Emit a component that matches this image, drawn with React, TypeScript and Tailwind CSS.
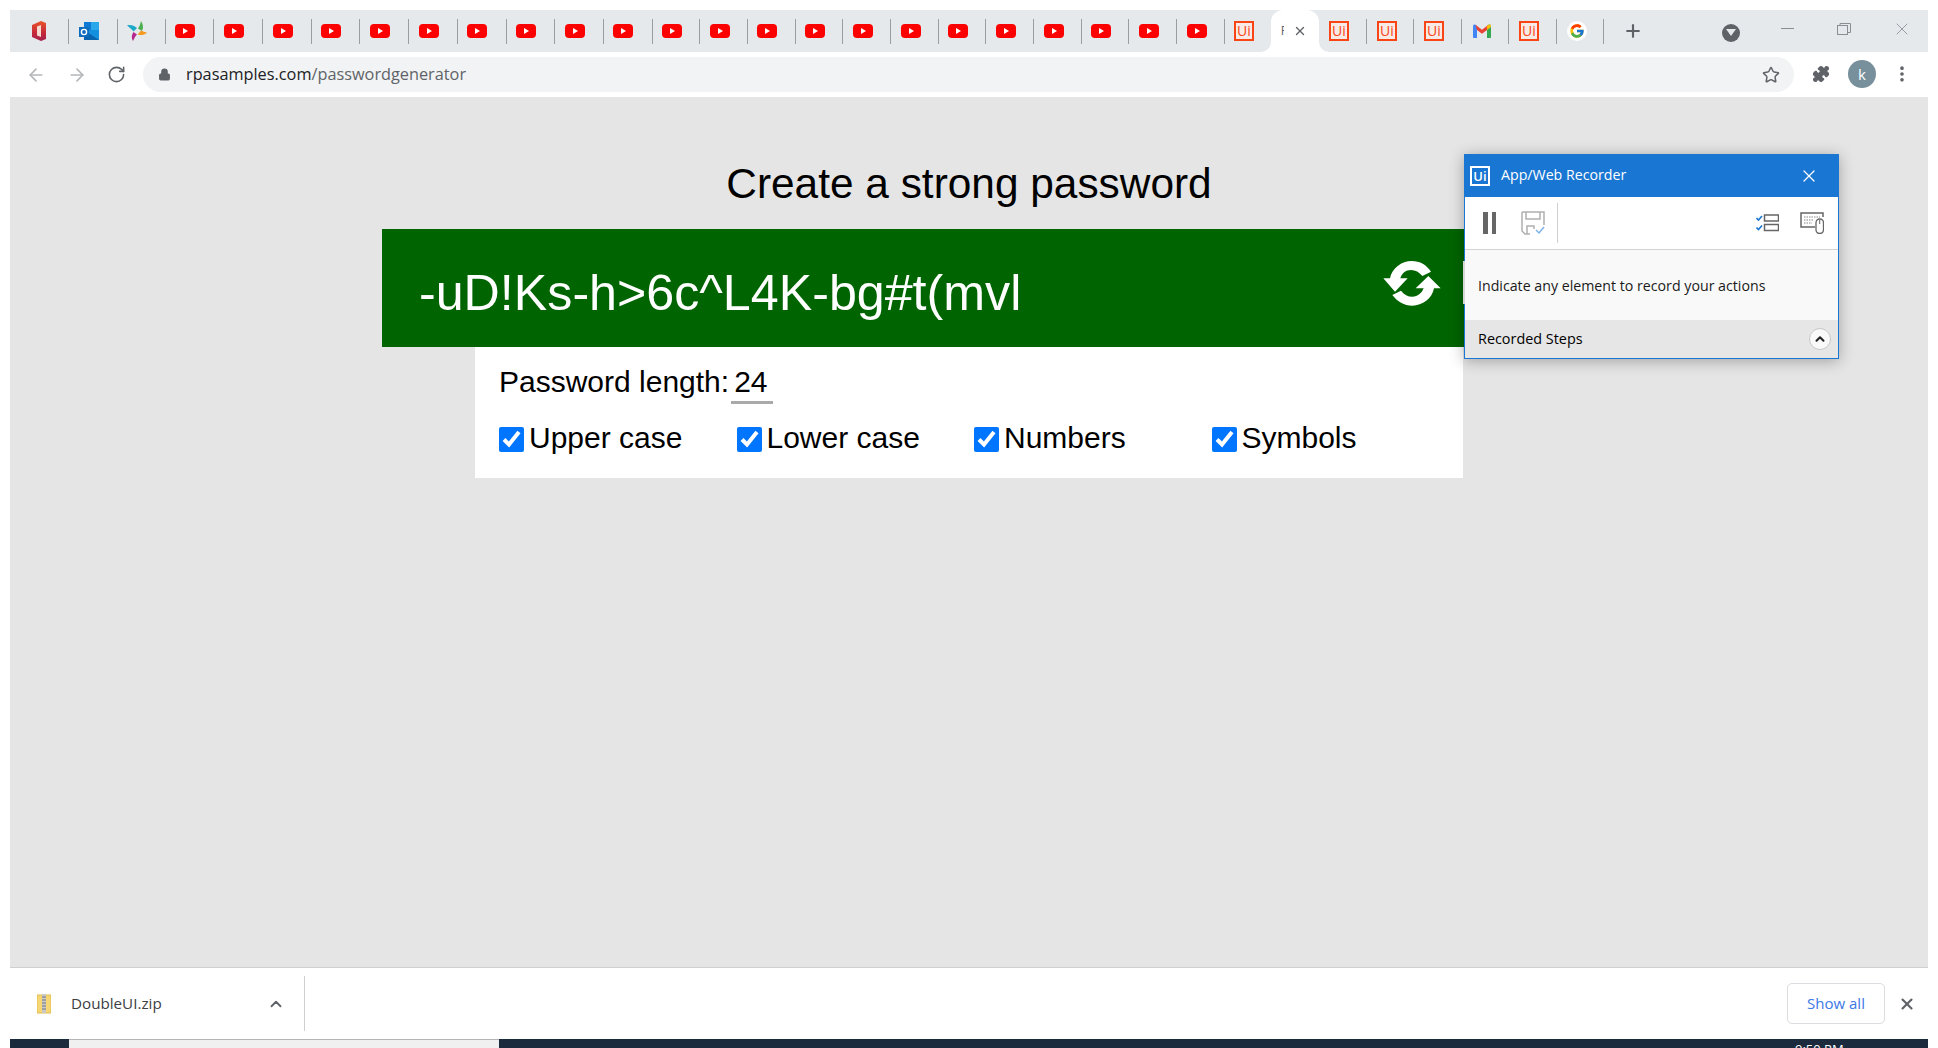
import { ArrowLeft, ArrowRight, ChevronUp, Lock, MoreVertical, Plus, Puzzle, RotateCw, Star, X } from "lucide-react";
import { FcGoogle } from "react-icons/fc";

const ui = "font-['Open_Sans',sans-serif]";

function OfficeIcon() {
  return (
    <svg viewBox="0 0 16 20" className="w-[16px] h-[20px]">
      <defs>
        <linearGradient id="off" x1="0" y1="0" x2="0" y2="1">
          <stop offset="0" stopColor="#e8552a" />
          <stop offset="0.6" stopColor="#c4283a" />
          <stop offset="1" stopColor="#a3204d" />
        </linearGradient>
      </defs>
      <path d="M1 4 L10 0 L15 2 V18 L10 20 L1 16 Z" fill="url(#off)" />
      <path d="M6 5.500 L10 4 V16 L6 14.500 Z" fill="#f6d9cf" />
    </svg>
  );
}

function OutlookIcon() {
  return (
    <svg viewBox="0 0 20 18" className="w-[20px] h-[18px]">
      <rect x="5" y="0" width="13" height="8" fill="#0f78d4" />
      <rect x="12" y="0" width="8" height="8" fill="#28a8ea" />
      <path d="M5 8 H20 V18 H5 Z" fill="#0a64ad" />
      <path d="M5 8 L20 18 V8 Z" fill="#1490df" />
      <rect x="0" y="5" width="10" height="10" fill="#0f6cbd" />
      <circle cx="5" cy="10" r="2.600" fill="none" stroke="#fff" strokeWidth="1.400" />
    </svg>
  );
}

function StarLogo() {
  return (
    <svg viewBox="0 0 20 20" className="w-[20px] h-[20px]">
      <path d="M14 0 C16.500 4 16.500 7 15 10 L11 7.500 C12.500 5 13.500 3 14 0 Z" fill="#4caf50" />
      <path d="M20 11.500 C17 14.500 14 14.500 10.500 13.500 L14 9.500 C16 10.500 18 11 20 11.500 Z" fill="#f59a23" />
      <path d="M6 20 C4 17 4.500 14 6.500 11 L10 13.500 C8 15.500 7 18 6 20 Z" fill="#b5278f" />
      <path d="M0 4.500 C3.500 3.500 7 4.500 10 7 L6.500 10.500 C4.500 8 2 6 0 4.500 Z" fill="#1fa9c9" />
    </svg>
  );
}

function YouTubeIcon() {
  return (
    <span className="flex items-center justify-center w-[20px] h-[14px] rounded-[4px] bg-[#ff0000]">
      <span className="w-0 h-0 border-y-[3.500px] border-y-transparent border-l-[5px] border-l-white ml-[1px]" />
    </span>
  );
}

function UiIcon() {
  return (
    <span className={`flex items-center justify-center w-[20px] h-[20px] border-2 border-[#fa4616] bg-[#f8ebe6] text-[#fa4616] text-[14px] font-medium leading-none ${ui}`}>
      Ui
    </span>
  );
}

function GmailIcon() {
  return (
    <svg viewBox="0 0 18 14" className="w-[18px] h-[14px]">
      <path d="M0 2 C0 0.500 1.500 0 2.500 0.800 L4 2 V14 H1 C0.400 14 0 13.600 0 13 Z" fill="#4285f4" />
      <path d="M18 2 C18 0.500 16.500 0 15.500 0.800 L14 2 V14 H17 C17.600 14 18 13.600 18 13 Z" fill="#34a853" />
      <path d="M2.500 0.800 L9 5.800 L15.500 0.800 L14 6 L9 9.800 L4 6 Z" fill="#ea4335" />
      <path d="M14 2 L15.500 0.800 C16.500 0 18 0.500 18 2 V3 L14 6 Z" fill="#fbbc04" />
    </svg>
  );
}

function GoogleIcon() {
  return (
    <span className="flex items-center justify-center w-[20px] h-[20px] rounded-full bg-white">
      <FcGoogle className="w-[16px] h-[16px]" />
    </span>
  );
}

function Tab({ icon, width = "w-[48.700px]" }: { icon: React.ReactNode; width?: string }) {
  return (
    <div className={`h-full shrink-0 flex items-center pl-[9.500px] ${width}`}>
      {icon}
      <span className="ml-auto w-[1px] h-[25px] bg-[#9a9da1]" />
    </div>
  );
}

function ActiveTab() {
  return (
    <div className="relative h-full w-[48px] ml-[8px] shrink-0 bg-white rounded-t-[12px] flex items-center pl-[10px]">
      <span className="absolute bottom-0 -left-[10px] w-[10px] h-[10px] bg-white">
        <span className="block w-full h-full bg-[#e6e9ec] rounded-br-[10px]" />
      </span>
      <span className="absolute bottom-0 -right-[10px] w-[10px] h-[10px] bg-white">
        <span className="block w-full h-full bg-[#e6e9ec] rounded-bl-[10px]" />
      </span>
      <span className={`w-[3px] overflow-hidden text-[12px] text-[#5f6368] ${ui}`}>P</span>
      <X className="w-[14px] h-[14px] ml-[9px] text-[#5f6368]" strokeWidth={2.400} />
    </div>
  );
}

function TabStrip() {
  const narrow = "w-[47.700px]";
  return (
    <div className="flex items-center h-[42px] bg-[#e6e9ec] shrink-0">
      <Tab icon={<OfficeIcon />} width="w-[59px] pl-[21px]" />
      <Tab icon={<OutlookIcon />} />
      <Tab icon={<StarLogo />} width="w-[48px] pl-[9px]" />
      {Array.from({ length: 10 }).map((_, i) => (
        <Tab key={i} icon={<YouTubeIcon />} />
      ))}
      {Array.from({ length: 12 }).map((_, i) => (
        <Tab key={i} icon={<YouTubeIcon />} width={narrow} />
      ))}
      <div className="h-full w-[38px] shrink-0 flex items-center pl-[9px]">
        <UiIcon />
      </div>
      <ActiveTab />
      <Tab icon={<UiIcon />} width="w-[48px] pl-[10px]" />
      <Tab icon={<UiIcon />} width="w-[47px] pl-[10px]" />
      <Tab icon={<UiIcon />} width="w-[48px] pl-[10px]" />
      <Tab icon={<GmailIcon />} width="w-[47px] pl-[11px]" />
      <Tab icon={<UiIcon />} width="w-[48px] pl-[10px]" />
      <Tab icon={<GoogleIcon />} width="w-[47px] pl-[10px]" />
      <Plus className="w-[20px] h-[20px] ml-[19px] text-[#5f6368]" strokeWidth={2.600} />
      <span className="flex items-center justify-center w-[18px] h-[18px] ml-[79px] mt-[3px] rounded-full bg-[#5f6368]">
        <span className="w-0 h-0 border-x-[5px] border-x-transparent border-t-[7px] border-t-[#e6e9ec]" />
      </span>
      <span className="w-[13px] h-[1px] bg-[#8a8e93] ml-[41px] -mt-[6px]" />
      <svg viewBox="0 0 14 12" className="w-[14px] h-[12px] ml-[43px] -mt-[4px]" fill="none" stroke="#8a8e93">
        <rect x="0.500" y="2.500" width="10" height="9" />
        <path d="M3 2.500 V0.500 H13.500 V9.500 H10.500" />
      </svg>
      <X className="w-[20px] h-[20px] ml-[41px] -mt-[4px] text-[#8a8e93]" strokeWidth={1} />
    </div>
  );
}

function Toolbar() {
  return (
    <div className="flex items-center h-[45px] bg-white shrink-0">
      <ArrowLeft className="w-[20px] h-[20px] ml-[16px] text-[#b4b7ba]" strokeWidth={2} />
      <ArrowRight className="w-[20px] h-[20px] ml-[21px] text-[#b4b7ba]" strokeWidth={2} />
      <RotateCw className="w-[19px] h-[19px] ml-[20px] text-[#5f6368]" strokeWidth={2} />
      <div className="flex items-center flex-1 h-[35px] ml-[17px] mr-[134px] rounded-full bg-[#f1f3f4]">
        <Lock className="w-[13px] h-[13px] ml-[15px] text-[#5f6368] fill-[#5f6368]" strokeWidth={2} />
        <span className={`ml-[15px] text-[16.300px] leading-none text-[#5f6368] ${ui}`}>
          <span className="text-[#202124]">rpasamples.com</span>/passwordgenerator
        </span>
        <Star className="w-[18px] h-[18px] ml-auto mr-[14px] text-[#5f6368]" strokeWidth={2} />
      </div>
      <Puzzle className="absolute left-[1812px] top-[65px] w-[18px] h-[18px] text-[#5f6368] fill-[#5f6368]" strokeWidth={1.500} />
      <span className={`absolute left-[1848px] top-[60px] w-[28px] h-[28px] rounded-full bg-[#78909c] flex items-center justify-center text-[15px] text-white ${ui}`}>
        k
      </span>
      <MoreVertical className="absolute left-[1892px] top-[64px] w-[20px] h-[20px] text-[#5f6368]" strokeWidth={2.400} />
    </div>
  );
}

function RefreshIcon() {
  return (
    <svg viewBox="0 0 225 195" className="w-[75px] h-[65px] shrink-0" fill="#fff">
      <path d="M25 85 H45 C50 55 80 33 110 33 C135 33 155 45 168 65 L142 78 C132 66 122 60 108 60 C92 60 80 70 76 85 H98 L60 125 Z" />
      <path d="M197 115 H177 C172 145 142 167 112 167 C87 167 67 155 52 135 L78 122 C88 134 98 140 112 140 C128 140 140 130 146 115 H122 L160 78 Z" />
    </svg>
  );
}

function OptionCheck({ label }: { label: string }) {
  return (
    <label className="flex items-center gap-[5px]">
      <input type="checkbox" checked readOnly className="w-[25px] h-[25px] m-0 accent-[#0075ff]" />
      <span className="text-[30px] leading-[34px] text-black -mt-[3px]">{label}</span>
    </label>
  );
}

function Recorder() {
  return (
    <div className={`absolute right-[89px] top-[57px] w-[375px] border border-[#1976d2] shadow-[0_2px_14px_rgba(0,0,0,0.3)] ${ui}`}>
      <div className="flex items-center h-[42px] bg-[#1976d2] text-white">
        <span className="flex items-center justify-center w-[20px] h-[20px] ml-[5px] border-2 border-white text-[13px] leading-none font-semibold">Ui</span>
        <span className="ml-[11px] -mt-[3px] text-[14.200px]">App/Web Recorder</span>
        <X className="w-[20px] h-[20px] ml-auto mr-[19px]" strokeWidth={1.500} />
      </div>
      <div className="flex items-center h-[53px] bg-white border-b border-[#d4d4d4]">
        <span className="w-[5px] h-[22px] ml-[18px] bg-[#666]" />
        <span className="w-[4px] h-[22px] ml-[4px] bg-[#666]" />
        <svg viewBox="0 0 24 24" className="w-[24px] h-[24px] ml-[25px]" fill="none" stroke="#b0b0b0" strokeWidth="1.500">
          <path d="M1 1 H23 V14 M9 23 H4 L1 20 V1" />
          <path d="M5 1 V8 H19 V1 M6 23 V15 H13 V18" />
          <path d="M15 19 L18 22 L23 16" stroke="#7fb2ea" />
        </svg>
        <span className="w-[1px] h-[40px] ml-[12px] bg-[#cfcfcf]" />
        <svg viewBox="0 0 23 18" className="w-[23px] h-[18px] ml-auto" fill="none">
          <rect x="8.500" y="1" width="14" height="6" stroke="#666" strokeWidth="1.500" />
          <rect x="8.500" y="10.500" width="14" height="6" stroke="#666" strokeWidth="1.500" />
          <path d="M0.500 4 L2.500 6 L6 2 M0.500 13.500 L2.500 15.500 L6 11.500" stroke="#1976d2" strokeWidth="1.600" />
        </svg>
        <svg viewBox="0 0 24 22" className="w-[24px] h-[22px] ml-[21px] mr-[14px]" fill="none">
          <path d="M15 15 H1 V1 H23 V5" stroke="#666" strokeWidth="1.500" />
          <path d="M4 5 H20 M4 8 H14 M4 11 H12" stroke="#888" strokeWidth="1.200" strokeDasharray="1.500 1" />
          <rect x="16" y="7" width="7.500" height="14.500" rx="3.700" fill="#fff" stroke="#666" strokeWidth="1.300" />
          <path d="M19.700 8 V12" stroke="#666" />
        </svg>
      </div>
      <div className="flex items-center h-[70px] pl-[13px] pt-[2px] bg-[#f9f9f9] text-[14.200px] text-[#1a1a1a]">
        Indicate any element to record your actions
      </div>
      <div className="flex items-center h-[38px] pl-[13px] bg-[#e6e6e6] text-[14.400px] font-medium text-black">
        Recorded Steps
        <span className="flex items-center justify-center w-[22px] h-[22px] ml-auto mr-[7px] rounded-full border border-[#c8c8c8] bg-[#f9f9f9]">
          <ChevronUp className="w-[14px] h-[14px] text-[#222]" strokeWidth={3.500} />
        </span>
      </div>
      <span className="absolute -left-[2px] top-[106px] w-[2px] h-[43px] bg-[#d6d6d6]" />
    </div>
  );
}

function PasswordPage() {
  return (
    <div className="relative flex-1 flex flex-col items-center bg-[#e5e5e5] border-b border-[#cfcfcf] font-['Liberation_Sans',sans-serif]">
      <h1 className="pt-[63px] pb-[21px] text-[42.400px] leading-[48px] font-normal text-black">Create a strong password</h1>
      <div className="flex items-center w-[1174px] h-[118px] pl-[37px] pr-[106px] bg-[#006400] text-white">
        <span className="mt-[10px] text-[50.200px] leading-none">-uD!Ks-h&gt;6c^L4K-bg#t(mvl</span>
        <span className="ml-auto mt-[-11px]">
          <RefreshIcon />
        </span>
      </div>
      <div className="w-[988px] h-[131px] pl-[24px] bg-white">
        <div className="flex items-start pt-[18px] h-[60px]">
          <span className="text-[30px] leading-[34px] text-black">Password length:</span>
          <span className="w-[42px] h-[39px] ml-[2px] pl-[3px] border-b-[3px] border-[#aaaaaa] text-[30px] leading-[34px] text-black">24</span>
        </div>
        <div className="grid grid-cols-4 w-[950px] mt-[17px]">
          <OptionCheck label="Upper case" />
          <OptionCheck label="Lower case" />
          <OptionCheck label="Numbers" />
          <OptionCheck label="Symbols" />
        </div>
      </div>
      <Recorder />
    </div>
  );
}

function ZipIcon() {
  return (
    <svg viewBox="0 0 14 20" className="w-[14px] h-[20px]">
      <rect x="0" y="1" width="14" height="18" fill="#f7d774" stroke="#e3bd4f" />
      <rect x="5" y="0" width="4" height="19" fill="#c9c9c9" />
      <path d="M5 3 H9 M5 6 H9 M5 9 H9 M5 12 H9 M5 15 H9" stroke="#777" strokeWidth="1" />
    </svg>
  );
}

function DownloadBar() {
  return (
    <div className={`flex items-center h-[71px] shrink-0 bg-white ${ui}`}>
      <span className="ml-[27px] flex">
        <ZipIcon />
      </span>
      <span className="ml-[20px] text-[15.200px] text-[#3c4043]">DoubleUI.zip</span>
      <ChevronUp className="w-[18px] h-[18px] ml-[105px] text-[#5f6368]" strokeWidth={2.400} />
      <span className="w-[1px] h-[55px] ml-[19px] bg-[#cfcfcf]" />
      <button className="w-[98px] h-[41px] ml-auto rounded-[5px] border border-[#dadce0] text-[15px] text-[#3b78e7]">Show all</button>
      <X className="w-[18px] h-[18px] ml-[13px] mr-[12px] text-[#5f6368]" strokeWidth={2.800} />
    </div>
  );
}

function TaskbarEdge() {
  return (
    <div className="relative flex h-[9px] shrink-0 bg-[#1b2a3d] overflow-hidden">
      <span className="w-[430px] ml-[59px] bg-[#f0f0f0] border-t border-[#b5b5b5]" />
      <span className={`absolute left-[1785px] top-[1px] text-[13px] leading-[18px] text-white ${ui}`}>9:50 PM</span>
    </div>
  );
}

export default function App() {
  return (
    <div className="relative flex flex-col h-[1048px] pt-[10px] px-[10px] bg-white overflow-hidden">
      <TabStrip />
      <Toolbar />
      <PasswordPage />
      <DownloadBar />
      <TaskbarEdge />
    </div>
  );
}
